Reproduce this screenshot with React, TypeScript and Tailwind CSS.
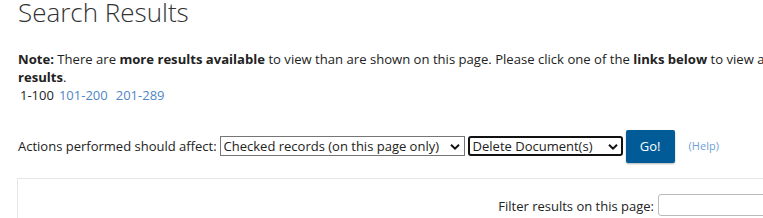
import React from "react"

const Chevron = () => (
    <svg width="10" height="7" viewBox="0 0 10 7" className="absolute right-[5px] top-1/2 -translate-y-1/2 pointer-events-none">
        <path d="M1 1.2 L5 5.2 L9 1.2" fill="none" stroke="#111" strokeWidth="2" />
    </svg>
)

export default function App() {
    return (
        <div className="w-[763px] h-[218px] overflow-hidden bg-white">
            <div className="w-[800px] pl-[18px] font-['Open_Sans',sans-serif] text-[13px] text-[#222]">
                <h1 className="text-[26px] font-light text-[#333] leading-[28px] -mt-[2px]">Search Results</h1>

                <p className="mt-[25px] leading-[17.5px] w-[770px] text-[13.1px]">
                    <b>Note:</b> There are <b>more results available</b> to view than are shown on this page. Please click one of the <b>links below</b> to view all <b>results</b>.
                </p>
                <div className="flex gap-[5px] pl-[2px] leading-[18px]">
                    <span>1-100</span>
                    <a href="#" className="text-[#4f86c6]">101-200</a>
                    <a href="#" className="text-[#4f86c6] ml-[3px]">201-289</a>
                </div>

                <div className="flex items-center mt-[26px]">
                    <span>Actions performed should affect:</span>
                    <div className="relative ml-[3px]">
                        <select className="appearance-none w-[245px] h-[20px] border border-[#767676] pl-[3px] pr-[18px] leading-[18px] bg-white">
                            <option>Checked records (on this page only)</option>
                        </select>
                        <Chevron />
                    </div>
                    <div className="relative ml-[3px]">
                        <select className="appearance-none w-[155px] h-[20px] border-2 border-[#111] rounded-[3px] pl-[3px] pr-[18px] leading-[16px] bg-white">
                            <option>Delete Document(s)</option>
                        </select>
                        <Chevron />
                    </div>
                    <button className="ml-[3px] w-[49px] h-[33px] bg-[#005b96] text-white rounded-[2px] shadow-[0_1px_2px_rgba(0,0,0,0.3)]">Go!</button>
                    <a href="#" className="ml-[14px] text-[11px] text-[#6f9fd6]">(Help)</a>
                </div>

                <div className="mt-[15px] -ml-[1px] border-l border-t border-[#e5e7eb] h-[60px] flex justify-end pr-[2px] pt-[15px]">
                    <div className="flex items-start gap-[4px]">
                        <span className="mt-[3px]">Filter results on this page:</span>
                        <input className="w-[140px] h-[22px] border border-[#bbb] rounded-[3px]" />
                    </div>
                </div>
            </div>
        </div>
    )
}
